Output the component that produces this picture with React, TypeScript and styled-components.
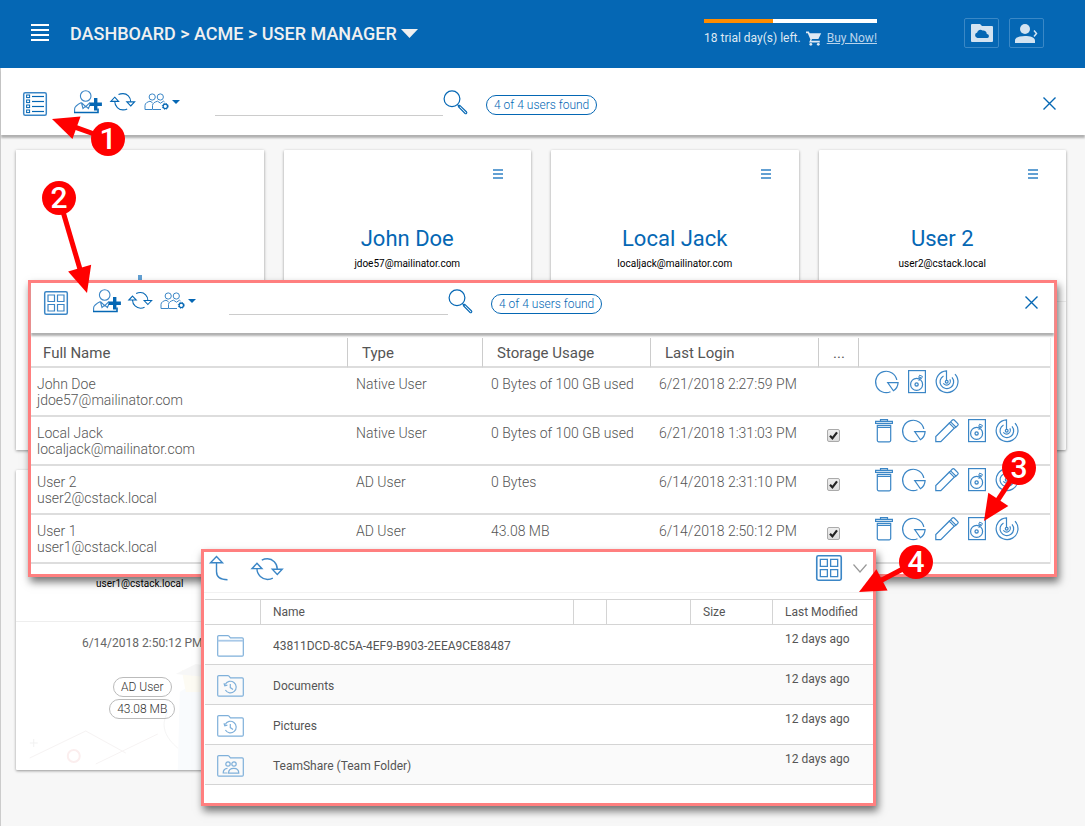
import React from "react";
import styled, { createGlobalStyle } from "styled-components";

const blue = "#0567b4";
const softBlue = "#3b86c6";

const GlobalStyle = createGlobalStyle`
  *, *::before, *::after { box-sizing: border-box; }
  body {
    margin: 0;
    background: #f7f7f7;
    font-family: Roboto, "Liberation Sans", sans-serif;
    font-size: 12px;
    color: #666;
  }
  svg { display: block; overflow: visible; fill: none; }
`;

/* ---------- page frame ---------- */

const Page = styled.div`
  display: flex;
  flex-direction: column;
  min-height: 100vh;
`;

const Header = styled.header`
  display: flex;
  align-items: center;
  height: 68px;
  padding: 0 41px 2px 31px;
  background: ${blue};
  color: #f0f0f0;
`;

const PlainButton = styled.button`
  display: flex;
  align-items: center;
  padding: 0;
  border: 0;
  background: none;
  color: inherit;
  font: inherit;
  cursor: pointer;
`;

const Breadcrumb = styled.nav`
  display: flex;
  align-items: center;
  gap: 4px;
  margin-left: 21px;
  font-size: 18px;
  font-weight: 500;
  white-space: nowrap;
`;

const Crumb = styled.a`
  color: inherit;
  text-decoration: none;
`;

const Trial = styled.div`
  display: flex;
  flex-direction: column;
  gap: 6px;
  width: 173px;
  margin: 0 87px 0 auto;
  color: #dfe9f3;
`;

const TrialBar = styled.div`
  height: 4px;
  background: #fff;
`;

const TrialUsed = styled.div`
  height: 100%;
  background: #ff8c00;
`;

const TrialText = styled.div`
  display: flex;
  align-items: center;
  justify-content: space-between;
  line-height: 18px;
  white-space: nowrap;
`;

const BuyLink = styled.a`
  color: #b9d4ec;
`;

const HeaderButtons = styled.div`
  display: flex;
  gap: 10px;
`;

const HeaderButton = styled(PlainButton)`
  justify-content: center;
  width: 35px;
  height: 30px;
  border: 1px solid #3a88c6;
  border-radius: 2px;
`;

const Stage = styled.main`
  position: relative;
  flex: 1;
  border-left: 1px solid #ccc;
`;

/* ---------- toolbars ---------- */

const Toolbar = styled.div<{ $compact?: boolean }>`
  display: flex;
  align-items: flex-start;
  height: ${(p) => (p.$compact ? 50 : 67)}px;
  padding: ${(p) => (p.$compact ? "6px 16px 0 13px" : "22px 29px 0 22px")};
  background: #fff;
  color: ${blue};
  box-shadow: 0 3px 2px #b0b0b0;
`;

const ViewButton = styled(PlainButton)`
  margin-top: 2px;
`;

const ToolGroup = styled.div<{ $compact?: boolean }>`
  display: flex;
  align-items: center;
  gap: ${(p) => (p.$compact ? 7 : 8)}px;
  height: 24px;
  margin-left: ${(p) => (p.$compact ? 25 : 27)}px;
`;

const MenuButton = styled(PlainButton)`
  gap: 2px;
`;

const SearchBox = styled.form<{ $compact?: boolean }>`
  display: flex;
  align-items: flex-start;
  margin-left: ${(p) => (p.$compact ? 33 : 35)}px;
`;

const SearchInput = styled.input<{ $compact?: boolean }>`
  width: ${(p) => (p.$compact ? 219 : 228)}px;
  height: 26px;
  border: 0;
  border-bottom: 1px solid #ccc;
  outline: 0;
  background: none;
  font: inherit;
`;

const Found = styled.span`
  margin: 5px 0 0 18px;
  padding: 0 7px;
  border: 1px solid ${blue};
  border-radius: 10px;
  font-weight: 300;
  line-height: 18px;
  white-space: nowrap;
`;

const CloseButton = styled(PlainButton)`
  margin: 7px 0 0 auto;
`;

/* ---------- user cards ---------- */

const Cards = styled.div`
  display: grid;
  grid-template-columns: repeat(4, 1fr);
  gap: 20px;
  padding: 15px 19px 56px 15px;
`;

const Card = styled.article`
  display: flex;
  flex-direction: column;
  height: 300px;
  background: #fff;
  border-radius: 1px;
  box-shadow: 0 1px 3px rgba(0, 0, 0, 0.4);
  overflow: hidden;
`;

const AddCard = styled(PlainButton)`
  justify-content: center;
  height: 300px;
  background: #fff;
  box-shadow: 0 1px 3px rgba(0, 0, 0, 0.4);
`;

const CardTop = styled.div`
  display: flex;
  flex-direction: column;
  align-items: center;
  height: 152px;
  padding: 19px 28px 0;
  border-bottom: 1px solid #eee;
`;

const CardMenu = styled(PlainButton)`
  align-self: flex-end;
`;

const CardName = styled.h2`
  min-height: 28px;
  margin: 46px 0 0;
  color: ${blue};
  font-size: 22px;
  font-weight: 400;
  line-height: 28px;
`;

const CardEmail = styled.div`
  margin-top: 3px;
  color: #000;
  font-size: 10px;
  line-height: 16px;
`;

const CardBottom = styled.div`
  display: grid;
  flex: 1;
`;

const CardArt = styled.svg`
  grid-area: 1 / 1;
  width: 100%;
  height: 148px;
`;

const CardFacts = styled.div`
  grid-area: 1 / 1;
  display: flex;
  flex-direction: column;
  align-items: center;
  gap: 2px;
  padding: 13px 0 0 5px;
`;

const CardDate = styled.div`
  margin-bottom: 24px;
  line-height: 16px;
`;

const Tag = styled.span`
  padding: 0 7px;
  border: 1px solid #bbb;
  border-radius: 10px;
  font-weight: 300;
  color: #333;
  line-height: 18px;
`;

/* ---------- floating windows ---------- */

const Window = styled.section`
  position: absolute;
  border: 3px solid #ff7f7f;
  background: #fff;
  box-shadow: 2px 5px 8px rgba(0, 0, 0, 0.55);
`;

const UsersWindow = styled(Window)`
  top: 212px;
  left: 27px;
  right: 28px;
  padding-bottom: 10px;
`;

const FilesWindow = styled(Window)`
  top: 481px;
  left: 200px;
  width: 675px;
  padding-bottom: 18px;
`;

const UserTable = styled.table`
  width: calc(100% - 3px);
  margin-top: 5px;
  border-collapse: separate;
  border-spacing: 0;
  table-layout: fixed;
  border-right: 1px solid #eee;
  font-size: 14px;
  font-weight: 300;
  line-height: 16px;
  color: #555;

  th {
    height: 30px;
    padding: 2px 14px 0;
    border-bottom: 2px solid #ddd;
    border-right: 1px solid #ccc;
    font-size: 15px;
    font-weight: 400;
    text-align: left;
    color: #555;
  }
  th:first-child { padding-left: 12px; }
  th:last-child { border-right: 0; }

  td {
    height: 49px;
    padding: 8px 8px 0;
    border-bottom: 2px solid #ddd;
    vertical-align: top;
    white-space: nowrap;
  }
  td:first-child { padding-left: 6px; }
  td:last-child { padding: 2px 0 0 16px; }
`;

const Actions = styled.div`
  display: flex;
  gap: 9px;
  color: ${softBlue};
`;

const Check = styled.span`
  display: grid;
  width: 13px;
  margin-top: 4px;
  > * { grid-area: 1 / 1; pointer-events: none; }
`;

const CheckInput = styled.input`
  appearance: none;
  width: 13px;
  height: 13px;
  margin: 0;
  border: 1px solid #aaa;
  border-radius: 2px;
  background: linear-gradient(#eee, #ddd);
  && { pointer-events: auto; }
`;

const FilesBar = styled.div`
  display: flex;
  align-items: flex-start;
  height: 41px;
  margin-bottom: 6px;
  padding: 3px 6px 0;
  border-bottom: 1px solid #f2f2f2;
  color: ${softBlue};
`;

const FilesRefresh = styled(PlainButton)`
  margin: 3px 0 0 21px;
`;

const FilesTools = styled.div`
  display: flex;
  align-items: center;
  gap: 11px;
  margin-left: auto;
`;

const FileTable = styled.table`
  width: calc(100% - 1px);
  margin-left: 1px;
  border-collapse: separate;
  border-spacing: 0;
  table-layout: fixed;
  line-height: 16px;
  color: #555;

  th {
    height: 26px;
    padding: 0 12px;
    border: 1px solid #d4d4d4;
    border-left: 0;
    font-weight: 400;
    text-align: left;
    white-space: nowrap;
  }
  th:last-child { border-right: 0; }

  td {
    height: 40px;
    padding: 3px 12px 0;
    border-bottom: 1px solid #d4d4d4;
  }
  tr:nth-child(even) td { background: #fafafa; }
  td:last-child { padding-top: 6px; vertical-align: top; }
`;

const Column = styled.col<{ $w?: number }>`
  width: ${(p) => (p.$w ? `${p.$w}px` : "auto")};
`;

/* ---------- callouts ---------- */

const CalloutBox = styled.div<{ $x: number; $y: number; $fromRight?: boolean }>`
  position: absolute;
  z-index: 3;
  top: ${(p) => p.$y - 17}px;
  ${(p) => (p.$fromRight ? "right" : "left")}: ${(p) => p.$x - 17}px;
  display: grid;
  width: 34px;
  height: 34px;
  > * { grid-area: 1 / 1; }
`;

const CalloutNumber = styled.span`
  position: relative;
  border-radius: 50%;
  background: #f00;
  color: #fff;
  font-size: 30px;
  font-weight: 500;
  line-height: 34px;
  text-align: center;
`;

type CalloutProps = { n: number; x: number; y: number; dx: number; dy: number; fromRight?: boolean };

/* Numbered disc with an arrow whose tip lies at (dx, dy) from the disc's centre. */
function Callout({ n, x, y, dx, dy, fromRight }: CalloutProps) {
  const length = Math.hypot(dx, dy);
  const angle = (Math.atan2(dy, dx) * 180) / Math.PI;
  return (
    <CalloutBox $x={x} $y={y} $fromRight={fromRight}>
      <svg width="34" height="34" viewBox="-17 -17 34 34" aria-hidden="true">
        <g transform={`rotate(${angle})`} fill="#f00">
          <rect x="0" y="-2.5" width={length - 20} height="5" />
          <path d={`M${length} 0l-26-12v24z`} />
        </g>
      </svg>
      <CalloutNumber>{n}</CalloutNumber>
    </CalloutBox>
  );
}

/* ---------- icons ---------- */

const line = { stroke: "currentColor", strokeWidth: 1.2 };

const ListIcon = () => (
  <svg width="24" height="24" viewBox="0 0 24 24" {...line}>
    <rect x="0.7" y="0.7" width="22.6" height="22.6" rx="1.5" strokeWidth="1.5" stroke={softBlue} />
    {[3, 8, 13, 18].map((y) => (
      <g key={y}>
        <rect x="3.6" y={y} width="3" height="2.6" strokeWidth="1" />
        <path d={`M9 ${y + 1.5}h12`} />
      </g>
    ))}
  </svg>
);

const GridIcon = ({ size }: { size: number }) => (
  <svg width={size} height={size} viewBox="0 0 24 24" {...line} stroke={softBlue}>
    <rect x="0.7" y="0.7" width="22.6" height="22.6" rx="1.5" strokeWidth="1.5" />
    <path d="M4 4h6.5v6.5H4zM13.5 4H20v6.5h-6.5zM4 13.5h6.5V20H4zM13.5 13.5H20V20h-6.5z" />
  </svg>
);

const AddUserIcon = () => (
  <svg width="28" height="24" viewBox="0 0 28 24" {...line} strokeWidth="1.1">
    <circle cx="11.7" cy="6" r="5.3" stroke={softBlue} />
    <path d="M7.500 12.500C3.500 14.500 .6 16 .6 19V22.500" stroke={softBlue} />
    <path d="M7.500 12.700l4.200 4 4.200-4M7.500 13l1.500 5.500 2.700-2.300 2.700 2.300 1.500-3.500" stroke={softBlue} />
    <path d="M0 22.500h24v-4" strokeWidth="1.6" />
    <path d="M21.700 8v12.400M15.500 14.300h12.400" strokeWidth="3.4" />
  </svg>
);

const RefreshIcon = ({ width }: { width: number }) => (
  <svg width={width} height={(width * 18) / 26} viewBox="0 0 26 18" {...line} strokeWidth="1.1">
    <path d="M4.700 8.300C4.700 13.500 9 16.900 13 16.900c1.600 0 2.900-.3 4.200-1" />
    <path d="M8.500 1.600C9.900.9 11.300.6 13 .6c4 0 7.700 3.400 7.700 8.200" />
    <path d="M4.700 4.200l3.900 4.200H.8zM20.700 13l3.900-4.100h-7.800z" />
  </svg>
);

const GroupIcon = () => (
  <svg width="26" height="18" viewBox="0 0 26 18" {...line} strokeWidth="1" stroke={softBlue}>
    <circle cx="8.200" cy="4" r="3.100" />
    <circle cx="16.300" cy="4" r="3.100" />
    <path d="M8 16.500H1V12.500C1 10 3.500 9 6 8.200l2.500 1.500M17 16.500H8.500V12.500C8.500 10 11 9 13.500 8.200l3 2 3-2 1 .7" />
    <circle cx="21.300" cy="13.300" r="2.200" stroke={blue} strokeWidth="1.200" />
    <circle cx="21.300" cy="13.300" r="3" stroke={blue} strokeWidth="1" strokeDasharray="1.200 1.156" />
  </svg>
);

const CaretIcon = ({ width, height }: { width: number; height: number }) => (
  <svg width={width} height={height} viewBox="0 0 8 4" preserveAspectRatio="none">
    <path d="M0 0h8L4 4z" fill="currentColor" />
  </svg>
);

const SearchIcon = () => (
  <svg width="25" height="25" viewBox="0 0 25 25" {...line}>
    <circle cx="9" cy="8.800" r="7.900" />
    <path d="M14.500 14.700l2 2" />
    <path d="M16.800 15.300l6.800 6.700c.8.9-.6 2.300-1.500 1.500l-6.700-6.800z" strokeWidth="1.100" />
  </svg>
);

const CloseIcon = () => (
  <svg width="13" height="13" viewBox="0 0 13 13" stroke={blue} strokeWidth="1.400">
    <path d="M.5.5l12 12M12.500.5l-12 12" />
  </svg>
);

const MenuLines = () => (
  <svg width="10" height="10" viewBox="0 0 10 10" stroke="#62a0d3" strokeWidth="2">
    <path d="M0 1h10M0 5h10M0 9h10" />
  </svg>
);

const TrashIcon = () => (
  <svg width="18" height="24" viewBox="0 0 18 24" {...line}>
    <path d="M5.500 2.200V.6h7v1.600M.6 2.300h16.800v2H.6zM2.300 6.300h13.400v15a1.500 1.500 0 0 1-1.500 1.500H3.800a1.500 1.500 0 0 1-1.500-1.500zM2.300 8.300h13.400" />
  </svg>
);

const UsageIcon = () => (
  <svg width="24" height="24" viewBox="0 0 24 24" {...line}>
    <path d="M21.800 10A10.700 10.700 0 1 0 15.500 21.800" />
    <path d="M12.700 12.600h10.400c-.2 3.500-2 6.500-4.700 8.200z" />
  </svg>
);

const PencilIcon = () => (
  <svg width="24" height="24" viewBox="0 0 24 24" {...line}>
    <path d="M.8 22.600V17.500L14.200 4.200l5 5L5.800 22.600z" />
    <path d="M15.600 2.800L17.400 1a1.300 1.300 0 0 1 1.800 0l3.600 3.600a1.300 1.300 0 0 1 0 1.800L21 8.200zM14.200 4.200l1.400-1.400M19.200 9.200L21 8.200" />
  </svg>
);

const DiskIcon = () => (
  <svg width="18" height="24" viewBox="0 0 18 24" {...line}>
    <rect x="0.600" y="0.600" width="16.800" height="22" />
    <circle cx="8.600" cy="14.400" r="6" />
    <circle cx="8.600" cy="14.400" r="1.600" strokeWidth="1.300" />
    <path d="M10.800 11l1.800-4M11.600 5.200l2.800 1.200-.9 2.200-2.800-1.200z" strokeWidth="1" />
  </svg>
);

const RadarIcon = () => (
  <svg width="24" height="24" viewBox="0 0 24 24" {...line}>
    <path d="M20 4.200A10.900 10.900 0 1 1 11.500.8V10.300" />
    <path d="M17 7.400A6.800 6.800 0 1 1 8.500 5.900" />
    <path d="M14.800 9.400A3.700 3.700 0 0 1 8.400 13.200" />
    <circle cx="11.700" cy="11.700" r="1.400" />
  </svg>
);

const UpIcon = () => (
  <svg width="20" height="26" viewBox="0 0 20 26" {...line} strokeWidth="1.400">
    <path d="M6.500 1.500l6 6.300h-12zM6.500 8v8.500c0 5 3.500 8.200 11 8.200" />
  </svg>
);

type FolderKind = "plain" | "history" | "team";

const FolderIcon = ({ kind }: { kind: FolderKind }) => (
  <svg width="27" height="22" viewBox="0 0 27 22" stroke="#7fb0da" strokeWidth="1.200">
    <path d="M.7 20V1.800C.7 1 1.100.7 1.800.7h9c.5 0 .9.200 1.200.5l1.400 1.600h11.800c.8 0 1.100.4 1.100 1.100V20c0 .8-.4 1.100-1.100 1.100H1.800c-.8 0-1.100-.4-1.100-1.100z" />
    {kind === "plain" && <path d="M.7 5.700h25.600" strokeWidth="1.800" stroke="#a9c9e8" />}
    {kind === "history" && (
      <>
        <path d="M8.200 9.500a5.800 5.800 0 1 1 .2 5.500M7 8.200l.8 2.600 2.600-.6" />
        <path d="M13.300 9v3.600l2.700 2" />
      </>
    )}
    {kind === "team" && (
      <>
        <circle cx="11" cy="9" r="2.200" />
        <circle cx="17" cy="9" r="2.200" />
        <path d="M10.500 18H6.200c0-3 1-4.500 4.300-4.700M11.500 18.200c0-3 2-4.900 5.300-4.900s5 1.900 5 4.900z" />
      </>
    )}
  </svg>
);

/* Pale figure and shapes printed on the lower half of a card. */
const Artwork = () => (
  <CardArt viewBox="0 0 248 148" preserveAspectRatio="xMidYMid slice" aria-hidden="true">
    <path d="M14 136l56-27 40 22M80 142l62-30" stroke="#f6f3f3" />
    <circle cx="58" cy="134" r="6" stroke="#fbeeee" strokeWidth="2" />
    <path d="M18 117v8M14 121h8" stroke="#f1f1f1" />
    <path d="M164 70l16-10 40 8v80h-58z" fill="#f9fbfd" />
    <path d="M166 48h28v22h-24z" fill="#fdfbf3" />
    <path d="M160 52l20-10 26 4-6 10z" fill="#f7f7f7" />
    <path d="M152 90c-8 14-2 26 10 36" stroke="#f5f5f5" />
  </CardArt>
);

/* ---------- data ---------- */

type User = {
  name: string;
  email: string;
  type: string;
  storage: string;
  login: string;
  editable: boolean;
};

const users: User[] = [
  { name: "John Doe", email: "jdoe57@mailinator.com", type: "Native User", storage: "0 Bytes of 100 GB used", login: "6/21/2018 2:27:59 PM", editable: false },
  { name: "Local Jack", email: "localjack@mailinator.com", type: "Native User", storage: "0 Bytes of 100 GB used", login: "6/21/2018 1:31:03 PM", editable: true },
  { name: "User 2", email: "user2@cstack.local", type: "AD User", storage: "0 Bytes", login: "6/14/2018 2:31:10 PM", editable: true },
  { name: "User 1", email: "user1@cstack.local", type: "AD User", storage: "43.08 MB", login: "6/14/2018 2:50:12 PM", editable: true },
];

type CardData = { title?: string; email: string; date?: string; tags?: string[] };

const cards: CardData[] = [
  { title: "John Doe", email: "jdoe57@mailinator.com" },
  { title: "Local Jack", email: "localjack@mailinator.com" },
  { title: "User 2", email: "user2@cstack.local" },
  { email: "user1@cstack.local", date: "6/14/2018 2:50:12 PM", tags: ["AD User", "43.08 MB"] },
];

const files: { name: string; kind: FolderKind; modified: string }[] = [
  { name: "43811DCD-8C5A-4EF9-B903-2EEA9CE88487", kind: "plain", modified: "12 days ago" },
  { name: "Documents", kind: "history", modified: "12 days ago" },
  { name: "Pictures", kind: "history", modified: "12 days ago" },
  { name: "TeamShare (Team Folder)", kind: "team", modified: "12 days ago" },
];

/* ---------- parts ---------- */

function UserToolbar({ compact }: { compact?: boolean }) {
  return (
    <Toolbar $compact={compact}>
      <ViewButton aria-label={compact ? "Card view" : "List view"}>
        {compact ? <GridIcon size={24} /> : <ListIcon />}
      </ViewButton>
      <ToolGroup $compact={compact}>
        <PlainButton aria-label="Add user"><AddUserIcon /></PlainButton>
        <PlainButton aria-label="Refresh"><RefreshIcon width={compact ? 25 : 26} /></PlainButton>
        <MenuButton aria-label="Group options">
          <GroupIcon />
          <CaretIcon width={8} height={4} />
        </MenuButton>
      </ToolGroup>
      <SearchBox $compact={compact} onSubmit={(e) => e.preventDefault()}>
        <SearchInput $compact={compact} aria-label="Search users" />
        <PlainButton aria-label="Search"><SearchIcon /></PlainButton>
      </SearchBox>
      <Found>4 of 4 users found</Found>
      <CloseButton aria-label="Close"><CloseIcon /></CloseButton>
    </Toolbar>
  );
}

function UserCard({ card }: { card: CardData }) {
  return (
    <Card>
      <CardTop>
        <CardMenu aria-label={`Menu for ${card.email}`}><MenuLines /></CardMenu>
        <CardName>{card.title}</CardName>
        <CardEmail>{card.email}</CardEmail>
      </CardTop>
      <CardBottom>
        <Artwork />
        {card.date && (
          <CardFacts>
            <CardDate>{card.date}</CardDate>
            {card.tags?.map((t) => <Tag key={t}>{t}</Tag>)}
          </CardFacts>
        )}
      </CardBottom>
    </Card>
  );
}

function UserRow({ user }: { user: User }) {
  return (
    <tr>
      <td>{user.name}<br />{user.email}</td>
      <td>{user.type}</td>
      <td>{user.storage}</td>
      <td>{user.login}</td>
      <td>
        {user.editable && (
          <Check>
            <CheckInput type="checkbox" defaultChecked aria-label={`Select ${user.name}`} />
            <svg width="13" height="13" viewBox="0 0 13 13" stroke="#222" strokeWidth="2.200">
              <path d="M3 6.800l2.400 2.500 4.600-6" />
            </svg>
          </Check>
        )}
      </td>
      <td>
        <Actions>
          {user.editable && <PlainButton aria-label="Delete"><TrashIcon /></PlainButton>}
          <PlainButton aria-label="Quota"><UsageIcon /></PlainButton>
          {user.editable && <PlainButton aria-label="Edit"><PencilIcon /></PlainButton>}
          <PlainButton aria-label="Storage"><DiskIcon /></PlainButton>
          <PlainButton aria-label="Activity"><RadarIcon /></PlainButton>
        </Actions>
      </td>
    </tr>
  );
}

export default function App() {
  return (
    <Page>
      <GlobalStyle />
      <Header>
        <PlainButton aria-label="Menu">
          <svg width="18" height="18" viewBox="0 0 18 18" stroke="#fff" strokeWidth="2">
            <path d="M0 1h18M0 6h18M0 11h18M0 16h18" />
          </svg>
        </PlainButton>
        <Breadcrumb>
          <Crumb href="#">{"DASHBOARD > ACME > USER MANAGER"}</Crumb>
          <PlainButton aria-label="Switch page"><CaretIcon width={17} height={9} /></PlainButton>
        </Breadcrumb>
        <Trial>
          <TrialBar><TrialUsed style={{ width: "40%" }} /></TrialBar>
          <TrialText>
            <span>18 trial day(s) left.</span>
            <svg width="16" height="15" viewBox="0 0 16 15">
              <path d="M0 .5h2.800l.9 1.700h11.500l-2.800 5.900H6l-.8 1.700h8.600v1.700H3.100l1.300-3.100L1.800 2.200H0z" fill="#dfe9f3" />
              <circle cx="4.800" cy="13.300" r="1.400" fill="#dfe9f3" />
              <circle cx="12.300" cy="13.300" r="1.400" fill="#dfe9f3" />
            </svg>
            <BuyLink href="#">Buy Now!</BuyLink>
          </TrialText>
        </Trial>
        <HeaderButtons>
          <HeaderButton aria-label="Files">
            <svg width="22" height="18" viewBox="0 0 22 18">
              <path d="M1 0h8l2 2h10a1 1 0 0 1 1 1v14a1 1 0 0 1-1 1H1a1 1 0 0 1-1-1V1a1 1 0 0 1 1-1z" fill="#d3e3f1" />
              <path d="M6.500 14a2.800 2.800 0 0 1-.3-5.500 3.300 3.300 0 0 1 5.300-2 3.500 3.500 0 0 1 4.300 3.400A2.100 2.100 0 0 1 16.500 14z" fill={blue} />
            </svg>
          </HeaderButton>
          <HeaderButton aria-label="Account">
            <svg width="23" height="19" viewBox="0 0 23 19">
              <circle cx="10" cy="5" r="5" fill="#d3e3f1" />
              <path d="M0 19v-2.500C0 13.300 5 12 10 12s10 1.300 10 4.500V19z" fill="#d3e3f1" />
              <path d="M19 6.500l2.500 3-2.500 3" stroke="#d3e3f1" strokeWidth="1.500" />
            </svg>
          </HeaderButton>
        </HeaderButtons>
      </Header>

      <Stage>
        <UserToolbar />
        <Cards>
          <AddCard aria-label="Add user card">
            <svg width="50" height="50" viewBox="0 0 50 50" stroke="#62a0d3" strokeWidth="4">
              <path d="M25 0v50M0 25h50" />
            </svg>
          </AddCard>
          {cards.map((c) => <UserCard key={c.email} card={c} />)}
        </Cards>

        <UsersWindow>
          <UserToolbar compact />
          <UserTable>
            <colgroup>
              <Column $w={317} />
              <Column $w={135} />
              <Column $w={168} />
              <Column $w={168} />
              <Column $w={40} />
              <Column />
            </colgroup>
            <thead>
              <tr>
                <th>Full Name</th>
                <th>Type</th>
                <th>Storage Usage</th>
                <th>Last Login</th>
                <th>...</th>
                <th aria-label="Actions" />
              </tr>
            </thead>
            <tbody>
              {users.map((u) => <UserRow key={u.name} user={u} />)}
            </tbody>
          </UserTable>
          <Callout n={3} x={35} y={185} dx={-35} dy={53} fromRight />
        </UsersWindow>

        <FilesWindow>
          <FilesBar>
            <PlainButton aria-label="Up one level"><UpIcon /></PlainButton>
            <FilesRefresh aria-label="Refresh files"><RefreshIcon width={33} /></FilesRefresh>
            <FilesTools>
              <PlainButton aria-label="Tile view"><GridIcon size={26} /></PlainButton>
              <PlainButton aria-label="Collapse">
                <svg width="14" height="9" viewBox="0 0 14 9" stroke="#999" strokeWidth="1.200">
                  <path d="M.5.500l6.500 7.500L13.500.5" />
                </svg>
              </PlainButton>
            </FilesTools>
          </FilesBar>
          <FileTable>
            <colgroup>
              <Column $w={56} />
              <Column $w={313} />
              <Column $w={33} />
              <Column $w={84} />
              <Column $w={82} />
              <Column />
            </colgroup>
            <thead>
              <tr>
                <th aria-label="Kind" />
                <th>Name</th>
                <th aria-label="Shared" />
                <th aria-label="Status" />
                <th>Size</th>
                <th>Last Modified</th>
              </tr>
            </thead>
            <tbody>
              {files.map((f) => (
                <tr key={f.name}>
                  <td><FolderIcon kind={f.kind} /></td>
                  <td>{f.name}</td>
                  <td />
                  <td />
                  <td />
                  <td>{f.modified}</td>
                </tr>
              ))}
            </tbody>
          </FileTable>
          <Callout n={4} x={712} y={10} dx={-57} dy={30} />
        </FilesWindow>

        <Callout n={1} x={107} y={71} dx={-56} dy={-20} />
        <Callout n={2} x={58} y={130} dx={28} dy={95} />
      </Stage>
    </Page>
  );
}
